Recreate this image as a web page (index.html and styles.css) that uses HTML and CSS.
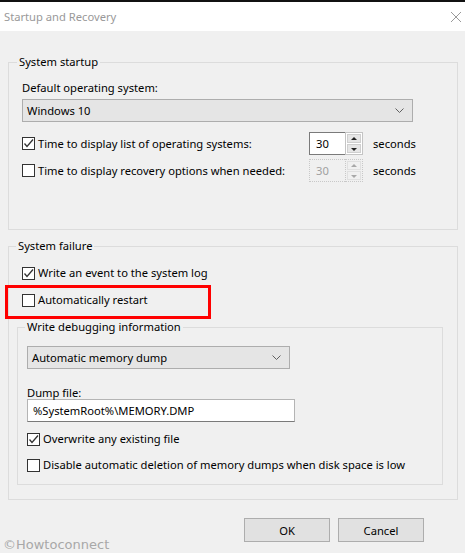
FILE: index.html
```html
<!DOCTYPE html>
<html>
<head>
<meta charset="utf-8">
<link rel="stylesheet" href="styles.css">
</head>
<body>
<div class="window">
  <div class="titlebar">
    <span class="title">Startup and Recovery</span>
    <svg class="close" width="12" height="12" viewBox="0 0 12 12"><path d="M1 1 L11 11 M11 1 L1 11" stroke="#9a9a9a" stroke-width="1" fill="none"/></svg>
  </div>

  <fieldset class="group g-startup">
    <legend>System startup</legend>
    <div class="label">Default operating system:</div>
    <div class="select os-select">
      <span>Windows 10</span>
      <svg class="chev" width="9" height="5" viewBox="0 0 9 5"><path d="M0.5 0.5 L4.5 4.5 L8.5 0.5" stroke="#606060" stroke-width="1" fill="none"/></svg>
    </div>
    <div class="spinrow first">
      <div class="check">
        <span class="box"><svg width="11" height="11" viewBox="0 0 11 11"><path d="M1.5 5.5 L4 8.5 L10 1.5" stroke="#333" stroke-width="1.3" fill="none"/></svg></span>
        <span>Time to display list of operating systems:</span>
      </div>
      <div class="spin">
        <span class="field">30</span>
        <span class="arrows"><span class="arr up"></span><span class="arr down"></span></span>
      </div>
      <span class="unit">seconds</span>
    </div>
    <div class="spinrow">
      <div class="check">
        <span class="box"></span>
        <span>Time to display recovery options when needed:</span>
      </div>
      <div class="spin disabled">
        <span class="field">30</span>
        <span class="arrows"><span class="arr up"></span><span class="arr down"></span></span>
      </div>
      <span class="unit">seconds</span>
    </div>
  </fieldset>

  <fieldset class="group g-failure">
    <legend>System failure</legend>
    <div class="check row">
      <span class="box"><svg width="11" height="11" viewBox="0 0 11 11"><path d="M1.5 5.5 L4 8.5 L10 1.5" stroke="#333" stroke-width="1.3" fill="none"/></svg></span>
      <span>Write an event to the system log</span>
    </div>
    <div class="check row second">
      <span class="box"></span>
      <span>Automatically restart</span>
    </div>

    <fieldset class="group g-debug">
      <legend>Write debugging information</legend>
      <div class="select dump-select">
        <span>Automatic memory dump</span>
        <svg class="chev" width="9" height="5" viewBox="0 0 9 5"><path d="M0.5 0.5 L4.5 4.5 L8.5 0.5" stroke="#606060" stroke-width="1" fill="none"/></svg>
      </div>
      <div class="label dump-label">Dump file:</div>
      <div class="textbox">%SystemRoot%\MEMORY.DMP</div>
      <div class="check row overwrite">
        <span class="box"><svg width="11" height="11" viewBox="0 0 11 11"><path d="M1.5 5.5 L4 8.5 L10 1.5" stroke="#333" stroke-width="1.3" fill="none"/></svg></span>
        <span>Overwrite any existing file</span>
      </div>
      <div class="check row disable">
        <span class="box"></span>
        <span>Disable automatic deletion of memory dumps when disk space is low</span>
      </div>
    </fieldset>
  </fieldset>

  <div class="buttons">
    <button class="btn">OK</button>
    <button class="btn">Cancel</button>
  </div>

  <div class="highlight"></div>
  <span class="watermark">©Howtoconnect</span>
</div>
</body>
</html>
```

FILE: styles.css
```css
* { box-sizing: border-box; }
html, body { margin: 0; padding: 0; }
body {
  width: 465px;
  height: 553px;
  background: #f0f0f0;
  font-family: "Noto Sans", "Open Sans", sans-serif;
  font-size: 11.2px;
  color: #000;
  overflow: hidden;
}
.window {
  position: relative;
  width: 465px;
  height: 553px;
}
.titlebar {
  height: 31px;
  background: #fff;
  border-top: 2px solid #111;
  display: flex;
  align-items: center;
  justify-content: space-between;
  padding: 0 3px 0 4px;
}
.title { color: #999; font-size: 11.2px; line-height: 16px; }
.close { display: block; margin-top: 1px; }

.group {
  margin: 0;
  border: 1px solid #dcdcdc;
  min-inline-size: 0;
}
.group legend {
  padding: 0 2px;
  line-height: 16px;
  height: 16px;
}
.g-startup {
  margin: 23px 7px 0 8px;
  padding: 9px 13px 47px 13px;
}
.g-startup legend { margin-left: -5px; }

.label { line-height: 17px; height: 16px; }

.select {
  height: 23px;
  background: #e5e5e5;
  border: 1px solid #adadad;
  display: flex;
  align-items: center;
  justify-content: space-between;
  padding: 0 8px 0 4px;
}
.os-select { margin-top: 4px; width: 391px; }
.chev { display: block; }

.spinrow {
  display: flex;
  align-items: center;
  height: 23px;
  margin-top: 4px;
}
.spinrow.first { margin-top: 10px; }
.spinrow .check { width: 287px; }

.check {
  display: flex;
  align-items: center;
  line-height: 16px;
  height: 16px;
}
.box {
  width: 13px;
  height: 13px;
  border: 1px solid #333;
  background: #fff;
  margin-right: 3px;
  display: flex;
  align-items: center;
  justify-content: center;
  flex: none;
}
.box svg { display: block; }

.spin {
  display: flex;
  height: 23px;
  width: 54px;
}
.spin .field {
  width: 36px;
  background: #fff;
  border: 1px solid #7a7a7a;
  border-right: none;
  padding-left: 6px;
  line-height: 21px;
}
.spin .arrows {
  width: 18px;
  border: 1px solid #c4c4c4;
  background: #fff;
  display: flex;
  flex-direction: column;
  padding: 1px;
  gap: 1px;
}
.arr {
  flex: 1;
  background: #e6e6e6;
  border: 1px solid #cfcfcf;
  position: relative;
}
.arr::after {
  content: "";
  position: absolute;
  left: 50%;
  top: 50%;
  margin-left: -3px;
  border-left: 3px solid transparent;
  border-right: 3px solid transparent;
}
.arr.up::after { border-bottom: 3px solid #222; margin-top: -2px; }
.arr.down::after { border-top: 3px solid #222; margin-top: -1px; }
.spin.disabled .field {
  background: transparent;
  border: 1px dotted #c8c8c8;
  border-right: none;
  color: #a0a0a0;
}
.spin.disabled .arrows { border: 1px dotted #c8c8c8; background: transparent; }
.spin.disabled .arr { background: #f0f0f0; border-color: #e0e0e0; }
.spin.disabled .arr.up::after { border-bottom-color: #a8a8a8; }
.spin.disabled .arr.down::after { border-top-color: #a8a8a8; }
.unit { margin-left: 10px; }

.g-failure {
  margin: 8px 7px 0 8px;
  padding: 11px 14px 14px 8px;
}
.g-failure > legend { margin-left: -1px; }
.g-failure > .row { margin-left: 5px; }
.g-failure > .row.second { margin-top: 11px; }

.g-debug {
  margin: 11px 0 0 0;
  padding: 11px 9px 11px 9px;
}
.g-debug legend { margin-left: -2px; }
.dump-select { width: 263px; }
.dump-label { margin-top: 16px; line-height: 15px; height: 14px; }
.textbox {
  width: 268px;
  height: 23px;
  background: #fff;
  border: 1px solid #7a7a7a;
  border-color: #b4b4b4 #b4b4b4 #7a7a7a #b4b4b4;
  padding-left: 5px;
  line-height: 21px;
}
.row.overwrite { margin-top: 9px; }
.row.disable { margin-top: 10px; }

.buttons {
  display: flex;
  justify-content: flex-end;
  gap: 8px;
  margin-top: 18px;
  padding-right: 41px;
}
.btn {
  width: 86px;
  height: 24px;
  background: #e1e1e1;
  border: 1px solid #adadad;
  font-family: inherit;
  font-size: 11.2px;
  color: #000;
  padding: 0;
}

.highlight {
  position: absolute;
  left: 5px;
  top: 285px;
  width: 206px;
  height: 34px;
  border: 3px solid #f00;
}
.watermark {
  position: absolute;
  left: 3px;
  top: 537px;
  font-family: "DejaVu Sans", sans-serif;
  font-size: 13px;
  line-height: 16px;
  color: #a8a8a8;
}
```
